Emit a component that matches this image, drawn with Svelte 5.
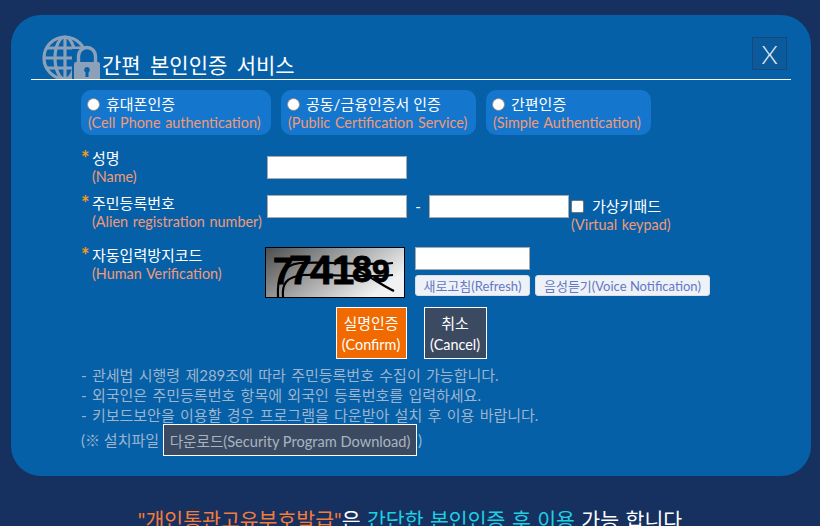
<script>
	const tabs = [
		{ ko: '휴대폰인증', en: '(Cell Phone authentication)', w: 190 },
		{ ko: '공동/금융인증서 인증', en: '(Public Certification Service)', w: 195 },
		{ ko: '간편인증', en: '(Simple Authentication)', w: 165 }
	];
	const notes = [
		'- 관세법 시행령 제289조에 따라 주민등록번호 수집이 가능합니다.',
		'- 외국인은 주민등록번호 항목에 외국인 등록번호를 입력하세요.',
		'- 키보드보안을 이용할 경우 프로그램을 다운받아 설치 후 이용 바랍니다.'
	];
</script>

<div class="page">
	<div class="panel">
		<header class="head">
			<svg class="logo" width="62" height="46" viewBox="0 0 62 46">
				<g fill="none" stroke="#8ba1b9" stroke-width="3.200">
					<circle cx="23" cy="25" r="21" />
					<ellipse cx="23" cy="25" rx="10" ry="21" />
					<path d="M23 4v42M5 15h36M2 25h42M5 35h36" />
				</g>
				<path d="M30 16h32v30H30z" fill="#0560a8" />
				<path d="M36.500 30v-7a8 8 0 0 1 17 0v7" fill="none" stroke="#8ba1b9" stroke-width="3.400" />
				<path fill-rule="evenodd" d="M34 29h22a2 2 0 0 1 2 2v15H32V31a2 2 0 0 1 2-2zm11 5a3 3 0 0 0-1.500 5.500V44h3v-4.500A3 3 0 0 0 45 34z" fill="#8ba1b9" />
			</svg>
			<h1>간편 본인인증 서비스</h1>
			<button class="close">X</button>
		</header>

		<div class="tabs">
			{#each tabs as t}
				<label class="tab" style="width: {t.w}px">
					<span class="tab-ko"><input type="radio" name="auth" />{t.ko}</span>
					<span class="en">{t.en}</span>
				</label>
			{/each}
		</div>

		<div class="row row-name">
			<div class="lbl">
				<span class="ko"><b>*</b>성명</span>
				<span class="en">(Name)</span>
			</div>
			<input class="field w140" type="text" />
		</div>

		<div class="row row-rrn">
			<div class="lbl">
				<span class="ko"><b>*</b>주민등록번호</span>
				<span class="en">(Alien registration number)</span>
			</div>
			<input class="field w140" type="text" />
			<span class="dash">-</span>
			<input class="field w140" type="text" />
			<label class="keypad">
				<span class="ko"><input type="checkbox" />가상키패드</span>
				<span class="en">(Virtual keypad)</span>
			</label>
		</div>

		<div class="row row-captcha">
			<div class="lbl">
				<span class="ko"><b>*</b>자동입력방지코드</span>
				<span class="en">(Human Verification)</span>
			</div>
			<svg class="captcha" width="140" height="51" viewBox="0 0 140 51">
				<defs>
					<linearGradient id="cg" x1="0" y1="0" x2="1" y2="0.5">
						<stop offset="0" stop-color="#4d4d4d" />
						<stop offset="0.5" stop-color="#a0a0a0" />
						<stop offset="1" stop-color="#f2f2f2" />
					</linearGradient>
				</defs>
				<rect x="0.500" y="0.500" width="139" height="50" fill="url(#cg)" stroke="#000" />
				<g font-family="'Liberation Sans', sans-serif" font-weight="700" fill="#000" stroke="#000" stroke-width="0.800">
					<text x="8" y="37" font-size="36">7</text>
					<text x="24" y="37" font-size="41">7</text>
					<text x="45" y="37" font-size="41">4</text>
					<text x="67" y="37" font-size="40">1</text>
					<text x="87" y="35" font-size="36">8</text>
					<text x="107" y="35" font-size="32">9</text>
				</g>
				<g fill="none" stroke="#000" stroke-width="2.200">
					<path d="M13 50c-1-16 2-32 22-34 30-2 60 3 93 0" />
					<path d="M18 50c-1-12 2-20 20-22 30-1 60 3 90 0" />
					<path d="M92 24c12 4 24 14 37 20" />
				</g>
			</svg>
			<div class="cap-side">
				<input class="field w115" type="text" />
				<div class="cap-btns">
					<button class="mini m115">새로고침(Refresh)</button>
					<button class="mini m175">음성듣기(Voice Notification)</button>
				</div>
			</div>
		</div>

		<div class="actions">
			<button class="act confirm">실명인증<br /><span>(Confirm)</span></button>
			<button class="act cancel">취소<br /><span>(Cancel)</span></button>
		</div>

		<ul class="notes">
			{#each notes as n}
				<li>{n}</li>
			{/each}
			<li class="dl"><span class="dl-l">(※ 설치파일</span><button class="download">다운로드(Security Program Download)</button><span class="dl-r">)</span></li>
		</ul>
	</div>

	<p class="foot"><span class="o">"개인통관고유부호발급"</span>은 <span class="c">간단한 본인인증 후 이용</span> 가능 합니다</p>
</div>

<style>
	:global(body) {
		margin: 0;
		background: #fff;
		font-family: Lato, "Noto Sans CJK KR", sans-serif;
	}
	.page {
		height: 526px;
		padding-top: 15px;
		box-sizing: border-box;
		overflow: hidden;
		background: #163060;
	}
	.panel {
		box-sizing: border-box;
		width: 800px;
		height: 461px;
		margin: 0 0 0 11px;
		padding: 22px 20px 0 20px;
		background: #0560a8;
		border-radius: 30px;
	}
	.head {
		display: flex;
		align-items: flex-end;
		height: 42px;
		border-bottom: 1px solid #fff;
		position: relative;
	}
	.logo {
		margin-left: 11px;
		flex: none;
	}
	h1 {
		margin: 0 0 1px -2px;
		font-size: 21px;
		font-weight: 400;
		word-spacing: 4px;
		color: #fff;
		line-height: 26px;
	}
	.close {
		position: absolute;
		right: 4px;
		top: 0;
		width: 35px;
		height: 33px;
		padding: 0;
		background: #0a5a9c;
		border: 1px solid #17477c;
		color: #e8eef5;
		font: 300 26px Lato, sans-serif;
	}
	.tabs {
		display: flex;
		gap: 10px;
		margin: 10px 0 0 50px;
	}
	.tab {
		display: flex;
		flex-direction: column;
		box-sizing: border-box;
		height: 45px;
		padding: 5px 0 0 7px;
		background: #1476cc;
		border-radius: 10px;
	}
	.tab-ko {
		display: flex;
		align-items: center;
		font-size: 15px;
		line-height: 18px;
		color: #fff;
	}
	.tab input {
		appearance: none;
		box-sizing: border-box;
		width: 13px;
		height: 13px;
		margin: 0 6px 0 -1px;
		background: #fff;
		border: 1px solid #8a8a8a;
		border-radius: 50%;
	}
	.en {
		display: block;
		font-size: 14.400px;
		line-height: 19px;
		color: #f09a78;
		white-space: nowrap;
		word-spacing: 1px;
	}
	.row {
		display: flex;
		align-items: flex-start;
	}
	.lbl {
		width: 186px;
		margin-left: 50px;
		flex: none;
		box-sizing: border-box;
	}
	.ko {
		display: flex;
		align-items: center;
		font-size: 15px;
		line-height: 18px;
		color: #fff;
	}
	.ko b {
		width: 11px;
		color: #f59a1b;
		font-weight: 700;
		font-size: 20px;
	}
	.lbl .en {
		margin-left: 11px;
	}
	.field {
		box-sizing: border-box;
		height: 23px;
		padding: 0;
		background: #fff;
		border: 1px solid #a9a9a9;
		display: block;
	}
	.w140 {
		width: 140px;
	}
	.w115 {
		width: 115px;
	}
	.row-name {
		margin-top: 14px;
	}
	.row-name .field {
		margin-top: 7px;
	}
	.row-rrn {
		margin-top: 8px;
	}
	.row-rrn .field {
		margin-top: 1px;
	}
	.dash {
		width: 22px;
		text-align: center;
		margin-top: 3px;
		font-size: 15px;
		color: #fff;
	}
	.keypad {
		margin: 3px 0 0 2px;
	}
	.keypad .ko input {
		appearance: none;
		box-sizing: border-box;
		width: 13px;
		height: 13px;
		margin: 0 8px 0 0;
		background: #fff;
		border: 1px solid #777;
		border-radius: 2px;
	}
	.row-captcha {
		margin-top: 12px;
	}
	.row-captcha .lbl {
		width: 184px;
	}
	.captcha {
		flex: none;
		display: block;
		margin-top: 1px;
	}
	.cap-side {
		margin: 1px 0 0 10px;
	}
	.cap-btns {
		display: flex;
		gap: 5px;
		margin-top: 5px;
	}
	.mini {
		box-sizing: border-box;
		height: 21px;
		padding: 0;
		background: #eef2f7;
		border: 1px solid #d8dde6;
		border-radius: 3px;
		color: #6478c8;
		font: 400 13px Lato, "Noto Sans CJK KR", sans-serif;
		white-space: nowrap;
	}
	.m115 {
		width: 115px;
	}
	.m175 {
		width: 175px;
	}
	.actions {
		display: flex;
		justify-content: center;
		gap: 17px;
		margin: 9px 0 0 0;
	}
	.act {
		box-sizing: content-box;
		height: 48px;
		padding: 2px 0 0;
		border: 1px solid #fff;
		color: #fff;
		font: 400 15px/21px Lato, "Noto Sans CJK KR", sans-serif;
	}
	.act span {
		font-size: 14.400px;
	}
	.confirm {
		width: 69px;
		background: #f06a00;
	}
	.cancel {
		width: 61px;
		background: #3b4a60;
	}
	.notes {
		list-style: none;
		margin: 6px 0 0 50px;
		padding: 0;
		font-size: 15px;
		line-height: 20px;
		word-spacing: 1.500px;
		color: #9db4cc;
	}
	.dl {
		display: flex;
		align-items: center;
		margin-top: -1px;
		word-spacing: 0;
	}
	.dl-l {
		width: 82px;
		white-space: nowrap;
	}
	.dl-r {
		margin-left: 1px;
	}
	.download {
		box-sizing: border-box;
		width: 254px;
		height: 32px;
		padding: 0;
		background: #3b4a60;
		border: 1px solid #fff;
		color: #a9b4c2;
		font: 400 14.600px Lato, "Noto Sans CJK KR", sans-serif;
		white-space: nowrap;
	}
	.foot {
		margin: 31px 0 0 0;
		text-align: center;
		font-size: 20.500px;
		line-height: 26px;
		word-spacing: 1.200px;
		color: #fff;
	}
	.o {
		color: #f47b3a;
	}
	.c {
		color: #1fd0e0;
	}
</style>
